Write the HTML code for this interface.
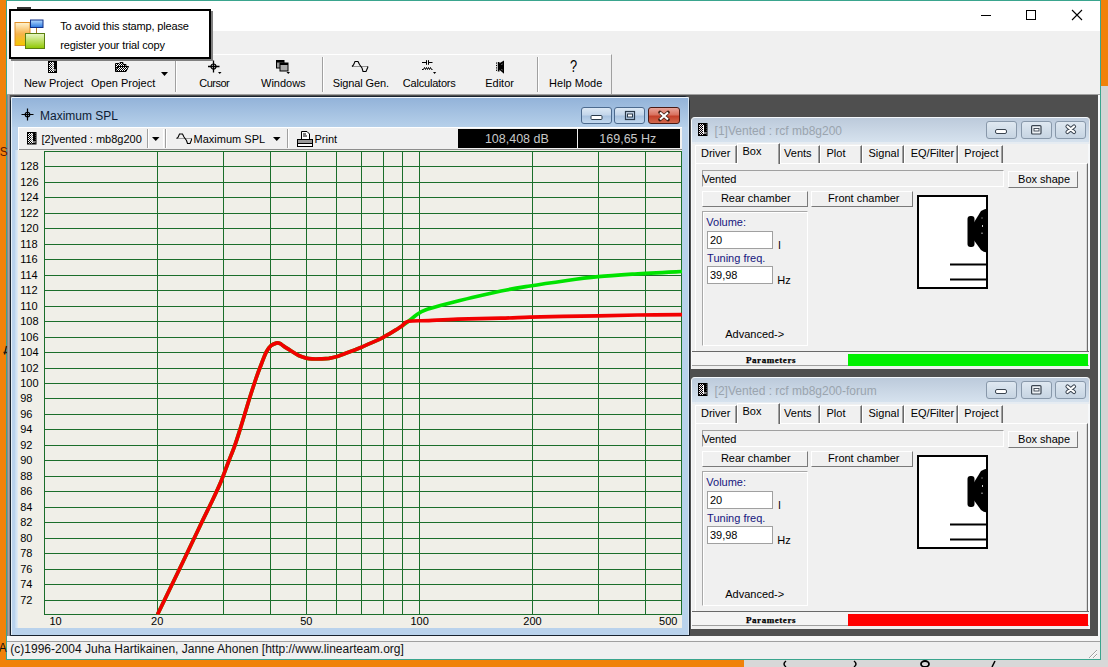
<!DOCTYPE html>
<html><head><meta charset="utf-8">
<style>
*{box-sizing:border-box;margin:0;padding:0}
html,body{width:1108px;height:667px;overflow:hidden;background:#f0820a;font-family:"Liberation Sans",sans-serif;font-size:11px;color:#000}
.a{position:absolute}
.t{position:absolute;white-space:pre;line-height:1}
svg{overflow:visible}
</style></head><body>

<svg width="0" height="0" style="position:absolute"><defs><pattern id="chk" width="2" height="2" patternUnits="userSpaceOnUse"><rect width="2" height="2" fill="#fff"/><rect width="1" height="1" fill="#000"/><rect x="1" y="1" width="1" height="1" fill="#000"/></pattern><pattern id="chkp" width="2" height="2" patternUnits="userSpaceOnUse"><rect width="2" height="2" fill="#f4e8f0"/><rect width="1" height="1" fill="#000"/><rect x="1" y="1" width="1" height="1" fill="#000"/></pattern></defs></svg>
<div class="a" style="left:1101px;top:86px;width:7px;height:581px;background:#d4d4d4"></div>
<div class="a" style="left:744px;top:660px;width:364px;height:7px;background:#d4d4d4"></div>
<div class="a" style="left:6px;top:0px;width:1095px;height:660px;background:#f0f0f0;border:1px solid #3aa58e"></div>
<div class="a" style="left:7px;top:1px;width:1093px;height:30px;background:#fff"></div>
<div class="a" style="left:981px;top:15px;width:10px;height:1px;background:#000"></div>
<div class="a" style="left:1026px;top:10px;width:10px;height:10px;border:1px solid #000"></div>
<svg class="a" style="left:1071px;top:9px;" width="12" height="12" viewBox="0 0 12 12"><path d="M1 1L11 11M11 1L1 11" stroke="#000" stroke-width="1.1"/></svg>
<div class="a" style="left:17px;top:7px;width:14px;height:2px;background:#333"></div>
<div class="a" style="left:13px;top:54px;width:599px;height:41px;border-left:1px solid #fff;border-top:1px solid #fff;border-right:1px solid #a0a0a0"></div>
<div class="a" style="left:7px;top:94px;width:1093px;height:1px;background:#a0a0a0"></div>
<div class="a" style="left:175px;top:57px;width:1px;height:35px;background:#a0a0a0;border-right:0"></div>
<div class="a" style="left:176px;top:57px;width:1px;height:35px;background:#fff"></div>
<div class="a" style="left:322px;top:57px;width:1px;height:35px;background:#a0a0a0;border-right:0"></div>
<div class="a" style="left:323px;top:57px;width:1px;height:35px;background:#fff"></div>
<div class="a" style="left:537px;top:57px;width:1px;height:35px;background:#a0a0a0;border-right:0"></div>
<div class="a" style="left:538px;top:57px;width:1px;height:35px;background:#fff"></div>
<div class="t" style="left:23.9px;top:77.8px;font-size:11px;">New Project</div>
<div class="t" style="left:91.0px;top:77.8px;font-size:11px;">Open Project</div>
<div class="t" style="left:199.2px;top:77.8px;font-size:11px;letter-spacing:-0.5px">Cursor</div>
<div class="t" style="left:261.0px;top:77.8px;font-size:11px;">Windows</div>
<div class="t" style="left:332.8px;top:77.8px;font-size:11px;letter-spacing:-0.12px">Signal Gen.</div>
<div class="t" style="left:402.8px;top:77.8px;font-size:11px;letter-spacing:-0.2px">Calculators</div>
<div class="t" style="left:485.2px;top:77.8px;font-size:11px;">Editor</div>
<div class="t" style="left:549.1px;top:77.8px;font-size:11px;">Help Mode</div>
<svg class="a" style="left:161px;top:72px;" width="8" height="4" viewBox="0 0 8 4"><path d="M0 0H7L3.5 4Z" fill="#000"/></svg>
<svg class="a" style="left:48px;top:61px;" width="10" height="12" viewBox="0 0 10 12"><rect x="0.5" y="0.5" width="8" height="11" fill="url(#chk)" stroke="#000"/><rect x="6" y="1" width="2.5" height="10" fill="#000"/><path d="M5 1V9H8" stroke="#fff" stroke-width="1" fill="none"/></svg>
<svg class="a" style="left:115px;top:62px;" width="14" height="10" viewBox="0 0 14 10"><path d="M0.5 9.5V1.5H4L5 0.5H8V2.5H11V4.5H13.5L11 9.5Z" fill="url(#chk)" stroke="#000"/><path d="M0.5 9.5L3 4.5H13.5" stroke="#000" fill="none"/></svg>
<svg class="a" style="left:206px;top:60px;" width="16" height="15" viewBox="0 0 16 15"><path d="M2 6.5H13.5M7.5 0.5V12.5" stroke="#000" stroke-width="1.3"/><circle cx="7.5" cy="6.5" r="2.5" fill="none" stroke="#000" stroke-width="1.2"/><path d="M12 12H15.5L13.75 14Z" fill="#000"/></svg>
<svg class="a" style="left:276px;top:60px;" width="15" height="15" viewBox="0 0 15 15"><rect x="0.5" y="0.5" width="7.5" height="7.5" fill="#999" stroke="#000"/><rect x="0.5" y="0.5" width="7.5" height="2" fill="#000"/><rect x="4" y="3" width="8" height="8" fill="#aaa" stroke="#000"/><rect x="4" y="3" width="8" height="2" fill="#000"/><path d="M10.5 12H14L12.25 14Z" fill="#000"/></svg>
<svg class="a" style="left:351px;top:60px;" width="18" height="13" viewBox="0 0 18 13"><path d="M1 6.5H17" stroke="#777" stroke-width="0.8"/><path d="M1 6.5L2.5 5L4 1.5H7L8.5 4.5L11 8L12 11.5H15L16.5 8L17 6.5" stroke="#000" stroke-width="1.1" fill="none"/></svg>
<svg class="a" style="left:421px;top:59px;" width="17" height="17" viewBox="0 0 17 17"><path d="M1 3.5H5.5M7.5 3.5H11.5" stroke="#000" stroke-width="1.2"/><path d="M5.5 1.2V5.8M7.5 1.2V5.8" stroke="#000" stroke-width="1"/><path d="M1 10.5H2.5L3.5 8.5L4.5 10.5L5.5 8.5L6.5 10.5L7.5 8.5L8.5 10.5L9.5 8.5L10.5 10.5H11.5" stroke="#000" stroke-width="1" fill="none"/><path d="M12 13H15.2L13.6 15Z" fill="#000"/></svg>
<svg class="a" style="left:495px;top:60px;" width="11" height="15" viewBox="0 0 11 15"><path d="M1.5 2.5V11.5" stroke="#000" stroke-dasharray="1.2,1.2"/><rect x="2.8" y="2" width="1.7" height="9.5" fill="#000"/><path d="M4 3.5L9 0.5V13.8L4 9.5Z" fill="#000"/><path d="M6.5 4.5L7.5 4M6.5 9.5L7.5 10" stroke="#ccc" stroke-width="0.8"/></svg>
<div class="t" style="left:569.8px;top:59.1px;font-size:16px;transform:scaleX(0.8);transform-origin:0 0">?</div>
<div class="a" style="left:7px;top:95px;width:1093px;height:541px;background:#4f4f4f"></div>
<div class="a" style="left:7px;top:95px;width:3px;height:541px;background:#8c868c"></div>
<div class="a" style="left:8px;top:95px;width:1px;height:541px;background:#a8a2a2"></div>
<div class="a" style="left:1098px;top:95px;width:2px;height:541px;background:#f6f8fa"></div>
<div class="a" style="left:7px;top:636px;width:1093px;height:23px;background:#f0f0f0"></div>
<div class="a" style="left:7px;top:636px;width:1093px;height:5px;background:#f6f6f6"></div>
<div class="a" style="left:7px;top:641px;width:1093px;height:1px;background:#a0a0a0"></div>
<div class="t" style="left:10.3px;top:643.4px;font-size:12px;color:#111">(c)1996-2004 Juha Hartikainen, Janne Ahonen [http://www.linearteam.org]</div>
<div class="a" style="left:10px;top:96px;width:680px;height:540px;background:#b9d2ec;border:1px solid #18222e;border-radius:5px 5px 0 0"></div>
<div class="a" style="left:11px;top:97px;width:678px;height:1px;background:#f0f6fc;border-radius:4px 4px 0 0"></div>
<div class="a" style="left:11px;top:98px;width:678px;height:29px;background:linear-gradient(#93b3d9,#b6d0ea)"></div>
<div class="a" style="left:11px;top:98px;width:1px;height:537px;background:#e6f0f8"></div>
<div class="a" style="left:688px;top:98px;width:1px;height:537px;background:#d6e4f2"></div>
<svg class="a" style="left:21px;top:108px;" width="13" height="13" viewBox="0 0 13 13"><path d="M0.5 6.5H12.5M6.5 0.5V12.5" stroke="#000" stroke-width="1.2"/><circle cx="6.5" cy="6.5" r="2.3" fill="none" stroke="#000" stroke-width="1.1"/></svg>
<div class="t" style="left:40.0px;top:110.0px;font-size:12px;color:#0e1c34">Maximum SPL</div>
<div class="a" style="left:581px;top:107px;width:31px;height:17px;border:1px solid #4c6a8e;border-radius:3px;background:linear-gradient(#dce8f4 0%,#c4d6ea 45%,#a9c3e0 55%,#c2d8ee 100%)"></div>
<svg class="a" style="left:590px;top:115px;" width="14" height="6" viewBox="0 0 14 6"><rect x="1" y="0.5" width="11" height="4" rx="1" fill="#fff" stroke="#2a3a4a"/></svg>
<div class="a" style="left:614px;top:107px;width:31px;height:17px;border:1px solid #4c6a8e;border-radius:3px;background:linear-gradient(#dce8f4 0%,#c4d6ea 45%,#a9c3e0 55%,#c2d8ee 100%)"></div>
<svg class="a" style="left:625px;top:111px;" width="10" height="9" viewBox="0 0 10 9"><rect x="0.5" y="0.5" width="9" height="8" fill="none" stroke="#2a3a4a" stroke-width="1.2"/><rect x="2.5" y="3" width="5" height="3" fill="#fff" stroke="#2a3a4a"/></svg>
<div class="a" style="left:648px;top:107px;width:32px;height:17px;border:1px solid #4a1a14;border-radius:3px;background:linear-gradient(#e8a49a 0%,#d9725f 45%,#c4402a 55%,#d26a4e 100%)"></div>
<svg class="a" style="left:658px;top:111px;" width="12" height="10" viewBox="0 0 12 10"><path d="M2 1.5L10 8.5M10 1.5L2 8.5" stroke="#3a1a10" stroke-width="3.6" stroke-linecap="round"/><path d="M2 1.5L10 8.5M10 1.5L2 8.5" stroke="#fff" stroke-width="2.2"/></svg>
<div class="a" style="left:18px;top:127px;width:664px;height:23px;background:#f0f0f0;border-top:1px solid #fff"></div>
<div class="a" style="left:18px;top:149px;width:664px;height:1px;background:#8c8c8c"></div>
<div class="a" style="left:18px;top:127px;width:1px;height:23px;background:#fff"></div>
<svg class="a" style="left:27px;top:132px;" width="10" height="13" viewBox="0 0 10 13"><rect x="0.5" y="0.5" width="8.5" height="11.5" fill="url(#chk)" stroke="#000"/><rect x="6" y="1" width="2.5" height="11" fill="#000"/><path d="M5 1V10H8.5" stroke="#fff" fill="none"/></svg>
<div class="t" style="left:41.5px;top:133.8px;font-size:11px;">[2]vented : mb8g200</div>
<div class="a" style="left:147px;top:129px;width:1px;height:19px;background:#a0a0a0"></div>
<div class="a" style="left:148px;top:129px;width:1px;height:19px;background:#fff"></div>
<svg class="a" style="left:152px;top:137px;" width="8" height="4" viewBox="0 0 8 4"><path d="M0 0H7.5L3.75 4Z" fill="#000"/></svg>
<div class="a" style="left:163px;top:129px;width:1px;height:19px;background:#fff"></div>
<div class="a" style="left:165px;top:129px;width:1px;height:19px;background:#a0a0a0"></div>
<div class="a" style="left:166px;top:129px;width:1px;height:19px;background:#fff"></div>
<svg class="a" style="left:176px;top:132px;" width="17" height="13" viewBox="0 0 17 13"><path d="M1 6.5H15.5" stroke="#888" stroke-width="0.8"/><path d="M0.5 6.5L2 5.5L3.5 2H6.5L8 5L10.5 8.5L11.5 11.5H14L15.5 8V6.5" stroke="#000" stroke-width="1.1" fill="none"/></svg>
<div class="t" style="left:193.6px;top:133.8px;font-size:11px;">Maximum SPL</div>
<svg class="a" style="left:273px;top:137px;" width="8" height="4" viewBox="0 0 8 4"><path d="M0 0H7.5L3.75 4Z" fill="#000"/></svg>
<div class="a" style="left:287px;top:129px;width:1px;height:19px;background:#a0a0a0"></div>
<div class="a" style="left:288px;top:129px;width:1px;height:19px;background:#fff"></div>
<svg class="a" style="left:297px;top:131px;" width="16" height="16" viewBox="0 0 16 16"><path d="M4.5 0.5H10L12.5 3V8.5H4.5Z" fill="#fff" stroke="#000"/><path d="M6 3H9M6 5H10" stroke="#000"/><rect x="0.5" y="8.5" width="15" height="4" fill="#999" stroke="#000"/><rect x="0.5" y="12.5" width="15" height="3" fill="#fff" stroke="#000"/></svg>
<div class="t" style="left:314.5px;top:133.8px;font-size:11px;">Print</div>
<div class="a" style="left:458px;top:129px;width:119px;height:19px;background:#000"></div>
<div class="a" style="left:578px;top:129px;width:102px;height:19px;background:#000"></div>
<div class="t" style="left:484.9px;top:133.1px;font-size:12.5px;color:#c8c8c8">108,408 dB</div>
<div class="t" style="left:599.3px;top:133.1px;font-size:12.5px;color:#c8c8c8">169,65 Hz</div>
<div class="a" style="left:18px;top:150px;width:664px;height:478px;background:#f0efe8"></div>
<div class="a" style="left:15px;top:150px;width:3px;height:478px;background:linear-gradient(90deg,#c4daf0,#e2ecf4)"></div>
<svg class="a" style="left:0;top:0" width="1108" height="667" viewBox="0 0 1108 667"><defs><clipPath id="pc"><rect x="44" y="151" width="638" height="464"/></clipPath></defs><g shape-rendering="crispEdges"><rect x="44.5" y="151.5" width="637" height="463" fill="none" stroke="#1b6e2b" stroke-width="1"/><rect x="157" y="151" width="1" height="464" fill="#1b6e2b"/><rect x="223" y="151" width="1" height="464" fill="#1b6e2b"/><rect x="270" y="151" width="1" height="464" fill="#1b6e2b"/><rect x="306" y="151" width="1" height="464" fill="#1b6e2b"/><rect x="336" y="151" width="1" height="464" fill="#1b6e2b"/><rect x="361" y="151" width="1" height="464" fill="#1b6e2b"/><rect x="383" y="151" width="1" height="464" fill="#1b6e2b"/><rect x="402" y="151" width="1" height="464" fill="#1b6e2b"/><rect x="419" y="151" width="1" height="464" fill="#1b6e2b"/><rect x="532" y="151" width="1" height="464" fill="#1b6e2b"/><rect x="598" y="151" width="1" height="464" fill="#1b6e2b"/><rect x="645" y="151" width="1" height="464" fill="#1b6e2b"/><rect x="44" y="166" width="638" height="1" fill="#1b6e2b"/><rect x="44" y="182" width="638" height="1" fill="#1b6e2b"/><rect x="44" y="197" width="638" height="1" fill="#1b6e2b"/><rect x="44" y="213" width="638" height="1" fill="#1b6e2b"/><rect x="44" y="228" width="638" height="1" fill="#1b6e2b"/><rect x="44" y="244" width="638" height="1" fill="#1b6e2b"/><rect x="44" y="259" width="638" height="1" fill="#1b6e2b"/><rect x="44" y="275" width="638" height="1" fill="#1b6e2b"/><rect x="44" y="290" width="638" height="1" fill="#1b6e2b"/><rect x="44" y="306" width="638" height="1" fill="#1b6e2b"/><rect x="44" y="321" width="638" height="1" fill="#1b6e2b"/><rect x="44" y="337" width="638" height="1" fill="#1b6e2b"/><rect x="44" y="352" width="638" height="1" fill="#1b6e2b"/><rect x="44" y="368" width="638" height="1" fill="#1b6e2b"/><rect x="44" y="383" width="638" height="1" fill="#1b6e2b"/><rect x="44" y="398" width="638" height="1" fill="#1b6e2b"/><rect x="44" y="414" width="638" height="1" fill="#1b6e2b"/><rect x="44" y="429" width="638" height="1" fill="#1b6e2b"/><rect x="44" y="445" width="638" height="1" fill="#1b6e2b"/><rect x="44" y="460" width="638" height="1" fill="#1b6e2b"/><rect x="44" y="476" width="638" height="1" fill="#1b6e2b"/><rect x="44" y="491" width="638" height="1" fill="#1b6e2b"/><rect x="44" y="507" width="638" height="1" fill="#1b6e2b"/><rect x="44" y="522" width="638" height="1" fill="#1b6e2b"/><rect x="44" y="538" width="638" height="1" fill="#1b6e2b"/><rect x="44" y="553" width="638" height="1" fill="#1b6e2b"/><rect x="44" y="569" width="638" height="1" fill="#1b6e2b"/><rect x="44" y="584" width="638" height="1" fill="#1b6e2b"/><rect x="44" y="600" width="638" height="1" fill="#1b6e2b"/></g><path d="M157.5 614.5 C161.8 605.7 175.9 576.5 183.0 561.7 C190.1 547.0 195.1 536.3 200.0 526.0 C204.9 515.7 209.1 507.4 212.6 500.0 C216.1 492.6 218.4 487.8 221.0 481.5 C223.6 475.2 226.1 467.9 228.4 462.0 C230.7 456.1 232.8 451.1 234.7 445.8 C236.6 440.5 237.5 437.6 239.9 430.0 C242.3 422.4 246.3 408.6 249.0 400.0 C251.7 391.4 254.0 384.4 256.0 378.5 C258.0 372.6 259.4 369.0 261.2 364.5 C262.9 360.0 264.9 354.8 266.5 351.7 C268.1 348.6 269.4 347.1 271.0 345.7 C272.6 344.3 274.7 343.5 276.2 343.1 C277.7 342.7 278.8 343.0 280.0 343.5 C281.2 344.0 281.8 344.9 283.7 346.1 C285.6 347.4 288.7 349.4 291.2 351.0 C293.7 352.6 296.2 354.3 298.7 355.5 C301.2 356.7 304.0 357.5 306.2 358.1 C308.4 358.7 309.7 358.8 312.0 358.9 C314.3 359.0 317.2 359.0 320.0 358.9 C322.8 358.8 326.0 358.8 329.0 358.4 C332.0 357.9 335.0 357.1 338.0 356.2 C341.0 355.3 343.2 354.3 347.1 352.8 C351.0 351.3 357.0 349.1 361.5 347.2 C366.0 345.3 370.6 343.2 374.2 341.6 C377.8 340.0 380.2 338.9 383.2 337.3 C386.2 335.7 389.2 333.9 392.2 332.1 C395.2 330.3 398.5 328.3 401.2 326.5 C403.9 324.7 405.8 323.4 408.5 321.3 C411.2 319.2 414.4 316.1 417.3 314.2 C420.2 312.3 421.7 311.4 426.0 309.8 C430.3 308.2 435.6 306.9 443.3 304.8 C451.0 302.8 462.6 299.8 472.2 297.5 C481.8 295.2 491.5 292.9 501.1 291.0 C510.7 289.1 519.0 287.8 530.0 286.0 C541.0 284.2 555.7 282.1 567.1 280.5 C578.5 278.9 586.9 277.8 598.2 276.7 C609.5 275.6 620.8 274.9 634.8 274.0 C648.8 273.1 674.1 271.9 682.0 271.5" fill="none" stroke="#00e200" stroke-width="3.7" stroke-linejoin="round" clip-path="url(#pc)"/><path d="M157.5 614.5 C161.8 605.7 175.9 576.5 183.0 561.7 C190.1 547.0 195.1 536.3 200.0 526.0 C204.9 515.7 209.1 507.4 212.6 500.0 C216.1 492.6 218.4 487.8 221.0 481.5 C223.6 475.2 226.1 467.9 228.4 462.0 C230.7 456.1 232.8 451.1 234.7 445.8 C236.6 440.5 237.5 437.6 239.9 430.0 C242.3 422.4 246.3 408.6 249.0 400.0 C251.7 391.4 254.0 384.4 256.0 378.5 C258.0 372.6 259.4 369.0 261.2 364.5 C262.9 360.0 264.9 354.8 266.5 351.7 C268.1 348.6 269.4 347.1 271.0 345.7 C272.6 344.3 274.7 343.5 276.2 343.1 C277.7 342.7 278.8 343.0 280.0 343.5 C281.2 344.0 281.8 344.9 283.7 346.1 C285.6 347.4 288.7 349.4 291.2 351.0 C293.7 352.6 296.2 354.3 298.7 355.5 C301.2 356.7 304.0 357.5 306.2 358.1 C308.4 358.7 309.7 358.8 312.0 358.9 C314.3 359.0 317.2 359.0 320.0 358.9 C322.8 358.8 326.0 358.8 329.0 358.4 C332.0 357.9 335.0 357.1 338.0 356.2 C341.0 355.3 343.2 354.3 347.1 352.8 C351.0 351.3 357.0 349.1 361.5 347.2 C366.0 345.3 370.6 343.2 374.2 341.6 C377.8 340.0 380.2 338.9 383.2 337.3 C386.2 335.7 389.2 333.9 392.2 332.1 C395.2 330.3 398.5 328.3 401.2 326.5 C403.9 324.7 403.9 322.3 408.5 321.3 C413.1 320.3 420.7 321.0 428.9 320.6 C437.1 320.2 445.8 319.6 457.8 319.2 C469.8 318.8 489.1 318.5 501.1 318.2 C513.1 317.9 519.7 317.5 530.0 317.2 C540.3 316.9 551.6 316.6 563.0 316.4 C574.4 316.2 585.8 316.0 598.2 315.8 C610.6 315.6 623.5 315.2 637.5 315.0 C651.5 314.8 674.6 314.7 682.0 314.6" fill="none" stroke="#f20000" stroke-width="3.7" stroke-linejoin="round" clip-path="url(#pc)"/></svg>
<div class="t" style="left:20.2px;top:161.1px;font-size:11px;">128</div>
<div class="t" style="left:20.2px;top:177.1px;font-size:11px;">126</div>
<div class="t" style="left:20.2px;top:192.1px;font-size:11px;">124</div>
<div class="t" style="left:20.2px;top:208.1px;font-size:11px;">122</div>
<div class="t" style="left:20.2px;top:223.1px;font-size:11px;">120</div>
<div class="t" style="left:20.2px;top:239.1px;font-size:11px;">118</div>
<div class="t" style="left:20.2px;top:254.1px;font-size:11px;">116</div>
<div class="t" style="left:20.2px;top:270.1px;font-size:11px;">114</div>
<div class="t" style="left:20.2px;top:285.1px;font-size:11px;">112</div>
<div class="t" style="left:20.2px;top:301.1px;font-size:11px;">110</div>
<div class="t" style="left:20.2px;top:316.1px;font-size:11px;">108</div>
<div class="t" style="left:20.2px;top:332.1px;font-size:11px;">106</div>
<div class="t" style="left:20.2px;top:347.1px;font-size:11px;">104</div>
<div class="t" style="left:20.2px;top:363.1px;font-size:11px;">102</div>
<div class="t" style="left:20.2px;top:378.1px;font-size:11px;">100</div>
<div class="t" style="left:20.2px;top:393.1px;font-size:11px;">98</div>
<div class="t" style="left:20.2px;top:409.1px;font-size:11px;">96</div>
<div class="t" style="left:20.2px;top:424.1px;font-size:11px;">94</div>
<div class="t" style="left:20.2px;top:440.1px;font-size:11px;">92</div>
<div class="t" style="left:20.2px;top:455.1px;font-size:11px;">90</div>
<div class="t" style="left:20.2px;top:471.1px;font-size:11px;">88</div>
<div class="t" style="left:20.2px;top:486.1px;font-size:11px;">86</div>
<div class="t" style="left:20.2px;top:502.1px;font-size:11px;">84</div>
<div class="t" style="left:20.2px;top:517.1px;font-size:11px;">82</div>
<div class="t" style="left:20.2px;top:533.1px;font-size:11px;">80</div>
<div class="t" style="left:20.2px;top:548.1px;font-size:11px;">78</div>
<div class="t" style="left:20.2px;top:564.1px;font-size:11px;">76</div>
<div class="t" style="left:20.2px;top:579.1px;font-size:11px;">74</div>
<div class="t" style="left:20.2px;top:595.1px;font-size:11px;">72</div>
<div class="t" style="left:15.5px;width:80px;text-align:center;top:616.3px;font-size:11px">10</div>
<div class="t" style="left:117.19999999999999px;width:80px;text-align:center;top:616.3px;font-size:11px">20</div>
<div class="t" style="left:266.3px;width:80px;text-align:center;top:616.3px;font-size:11px">50</div>
<div class="t" style="left:379.6px;width:80px;text-align:center;top:616.3px;font-size:11px">100</div>
<div class="t" style="left:492.5px;width:80px;text-align:center;top:616.3px;font-size:11px">200</div>
<div class="t" style="left:628.3px;width:80px;text-align:center;top:616.3px;font-size:11px">500</div>
<div class="a" style="left:691px;top:117px;width:399px;height:252px;background:#f0f0f0;border-radius:4px 4px 0 0;border-top:1px solid #f4f8fc;border-left:1px solid #f8fafc"></div>
<div class="a" style="left:692px;top:118px;width:397px;height:24px;background:linear-gradient(#bccadb,#d6e2ee);border-radius:3px 3px 0 0"></div>
<div class="a" style="left:692px;top:142px;width:397px;height:2px;background:#e6ecf2"></div>
<svg class="a" style="left:698px;top:123px;" width="10" height="13" viewBox="0 0 10 13"><rect x="0.5" y="0.5" width="8.5" height="12" fill="url(#chkp)" stroke="#000"/><rect x="6" y="1" width="2.5" height="11.5" fill="#000"/><path d="M5.5 2V10H8.5" stroke="#fff" fill="none"/></svg>
<div class="t" style="left:714.6px;top:124.6px;font-size:12px;color:#9aa4ae">[1]Vented : rcf mb8g200</div>
<div class="a" style="left:986px;top:121px;width:31px;height:18px;border:1px solid #8898aa;border-radius:3px;background:linear-gradient(#dfe8f1,#c6d4e2)"></div>
<svg class="a" style="left:995px;top:129px;" width="13" height="5" viewBox="0 0 13 5"><rect x="0.5" y="0.5" width="11" height="4" rx="1.5" fill="#fff" stroke="#3a4450"/></svg>
<div class="a" style="left:1021px;top:121px;width:31px;height:18px;border:1px solid #8898aa;border-radius:3px;background:linear-gradient(#dfe8f1,#c6d4e2)"></div>
<svg class="a" style="left:1031px;top:125px;" width="11" height="10" viewBox="0 0 11 10"><rect x="0.6" y="0.6" width="9.4" height="8.4" rx="1" fill="#eef2f6" stroke="#3a4450" stroke-width="1.2"/><rect x="3" y="3.5" width="5" height="2.5" fill="#fff" stroke="#3a4450" stroke-width="0.9"/></svg>
<div class="a" style="left:1055px;top:121px;width:31px;height:18px;border:1px solid #8898aa;border-radius:3px;background:linear-gradient(#dfe8f1,#c6d4e2)"></div>
<svg class="a" style="left:1064px;top:123px;" width="14" height="12" viewBox="0 0 14 12"><path d="M3.5 3.5L10 9M10 3.5L3.5 9" stroke="#3a4450" stroke-width="4.2" stroke-linecap="round"/><path d="M3.5 3.5L10 9M10 3.5L3.5 9" stroke="#fff" stroke-width="2.2" stroke-linecap="round"/></svg>
<div class="a" style="left:695px;top:163px;width:393px;height:190px;border-top:1px solid #fff;border-left:1px solid #fff;border-right:1px solid #6c6c6c;border-bottom:1px solid #6c6c6c;box-shadow:inset -1px -1px 0 #d8d8d8"></div>
<div class="a" style="left:1088px;top:144px;width:2px;height:225px;background:#f6f8fa"></div>
<div class="a" style="left:695px;top:145px;width:42px;height:18px;border-top:1px solid #fff;border-left:1px solid #fff;border-right:1px solid #696969;box-shadow:inset -1px 0 0 #a0a0a0"></div>
<div class="t" style="left:701.0px;top:147.9px;font-size:11px;">Driver</div>
<div class="a" style="left:737px;top:143px;width:43px;height:21px;background:#f0f0f0;border-top:1px solid #fff;border-left:1px solid #fff;border-right:1px solid #696969;box-shadow:inset -1px 0 0 #a0a0a0"></div>
<div class="t" style="left:742.5px;top:146.1px;font-size:11px;">Box</div>
<div class="a" style="left:780px;top:145px;width:40px;height:18px;border-top:1px solid #fff;border-left:1px solid #fff;border-right:1px solid #696969;box-shadow:inset -1px 0 0 #a0a0a0"></div>
<div class="t" style="left:784.1px;top:147.9px;font-size:11px;">Vents</div>
<div class="a" style="left:820px;top:145px;width:42px;height:18px;border-top:1px solid #fff;border-left:1px solid #fff;border-right:1px solid #696969;box-shadow:inset -1px 0 0 #a0a0a0"></div>
<div class="t" style="left:826.5px;top:147.9px;font-size:11px;">Plot</div>
<div class="a" style="left:862px;top:145px;width:42px;height:18px;border-top:1px solid #fff;border-left:1px solid #fff;border-right:1px solid #696969;box-shadow:inset -1px 0 0 #a0a0a0"></div>
<div class="t" style="left:868.5px;top:147.9px;font-size:11px;">Signal</div>
<div class="a" style="left:904px;top:145px;width:54px;height:18px;border-top:1px solid #fff;border-left:1px solid #fff;border-right:1px solid #696969;box-shadow:inset -1px 0 0 #a0a0a0"></div>
<div class="t" style="left:910.7px;top:147.9px;font-size:11px;">EQ/Filter</div>
<div class="a" style="left:958px;top:145px;width:45px;height:18px;border-top:1px solid #fff;border-left:1px solid #fff;border-right:1px solid #696969;box-shadow:inset -1px 0 0 #a0a0a0"></div>
<div class="t" style="left:964.3px;top:147.9px;font-size:11px;">Project</div>
<div class="a" style="left:702px;top:170px;width:302px;height:17px;background:#f0f0f0;border-top:1px solid #a0a0a0;border-left:1px solid #a0a0a0;border-bottom:1px solid #fff;border-right:1px solid #fff"></div>
<div class="t" style="left:702.2px;top:173.6px;font-size:11px;">Vented</div>
<div class="a" style="left:1008px;top:171px;width:70px;height:17px;background:#f0f0f0;border-top:1px solid #fff;border-left:1px solid #fff;border-bottom:1px solid #7a7a7a;border-right:1px solid #7a7a7a"></div>
<div class="t" style="left:1018.1px;top:174.1px;font-size:11px;">Box shape</div>
<div class="a" style="left:702px;top:191px;width:106px;height:16px;background:#f0f0f0;border-top:1px solid #fff;border-left:1px solid #fff;border-bottom:1px solid #7a7a7a;border-right:1px solid #7a7a7a"></div>
<div class="t" style="left:720.9px;top:192.9px;font-size:11px;">Rear chamber</div>
<div class="a" style="left:811px;top:191px;width:102px;height:16px;background:#f0f0f0;border-top:1px solid #fff;border-left:1px solid #fff;border-bottom:1px solid #7a7a7a;border-right:1px solid #7a7a7a"></div>
<div class="t" style="left:828.0px;top:192.9px;font-size:11px;">Front chamber</div>
<div class="a" style="left:702px;top:211px;width:106px;height:135px;border-top:1px solid #a8a8a8;border-left:1px solid #a8a8a8;border-right:1px solid #fff;border-bottom:1px solid #fff;box-shadow:inset 1px 1px 0 #fff"></div>
<div class="t" style="left:706.3px;top:217.1px;font-size:11px;color:#16167e">Volume:</div>
<div class="a" style="left:707px;top:231px;width:66px;height:18px;border:1px solid #a0a0a0;background:#fff"></div>
<div class="t" style="left:709.9px;top:234.9px;font-size:11px;">20</div>
<div class="t" style="left:778.3px;top:239.9px;font-size:11px;">l</div>
<div class="t" style="left:707.1px;top:252.9px;font-size:11px;color:#16167e">Tuning freq.</div>
<div class="a" style="left:707px;top:266px;width:66px;height:18px;border:1px solid #a0a0a0;background:#fff"></div>
<div class="t" style="left:709.9px;top:269.9px;font-size:11px;">39,98</div>
<div class="t" style="left:777.3px;top:275.3px;font-size:11px;">Hz</div>
<div class="t" style="left:725.2px;top:329.0px;font-size:11px;">Advanced-></div>
<svg class="a" style="left:916px;top:194px;" width="74" height="97" viewBox="0 0 74 97"><rect x="2" y="2" width="69" height="92" fill="#fff" stroke="#000" stroke-width="2"/><rect x="51.5" y="22" width="7" height="31" rx="3" fill="#000"/><path d="M57 30L65 17Q71 14 71 15V58Q69 59 65 56L57 45Z" fill="#000"/><path d="M66 23.5V24.5M66.5 31V33M66 38.5V40" stroke="#ccc" stroke-width="1"/><path d="M34 70.5H71M34 85.5H71" stroke="#000" stroke-width="2"/></svg>
<div class="a" style="left:692px;top:351px;width:397px;height:1px;background:#696969"></div>
<div class="a" style="left:692px;top:352px;width:397px;height:13px;background:#f4f4f4"></div>
<div class="a" style="left:692px;top:365px;width:397px;height:1px;background:#a0a0a0"></div>
<div class="a" style="left:848px;top:354px;width:240px;height:12px;background:#00f000"></div>
<div class="t" style="left:746px;top:355.5px;font-family:'Liberation Serif',serif;font-weight:bold;font-size:9px;letter-spacing:0.55px;-webkit-text-stroke:0.25px #000">Parameters</div>
<div class="a" style="left:691px;top:377px;width:399px;height:252px;background:#f0f0f0;border-radius:4px 4px 0 0;border-top:1px solid #f4f8fc;border-left:1px solid #f8fafc"></div>
<div class="a" style="left:692px;top:378px;width:397px;height:24px;background:linear-gradient(#bccadb,#d6e2ee);border-radius:3px 3px 0 0"></div>
<div class="a" style="left:692px;top:402px;width:397px;height:2px;background:#e6ecf2"></div>
<svg class="a" style="left:698px;top:383px;" width="10" height="13" viewBox="0 0 10 13"><rect x="0.5" y="0.5" width="8.5" height="12" fill="url(#chkp)" stroke="#000"/><rect x="6" y="1" width="2.5" height="11.5" fill="#000"/><path d="M5.5 2V10H8.5" stroke="#fff" fill="none"/></svg>
<div class="t" style="left:714.6px;top:384.6px;font-size:12px;color:#9aa4ae">[2]Vented : rcf mb8g200-forum</div>
<div class="a" style="left:986px;top:381px;width:31px;height:18px;border:1px solid #8898aa;border-radius:3px;background:linear-gradient(#dfe8f1,#c6d4e2)"></div>
<svg class="a" style="left:995px;top:389px;" width="13" height="5" viewBox="0 0 13 5"><rect x="0.5" y="0.5" width="11" height="4" rx="1.5" fill="#fff" stroke="#3a4450"/></svg>
<div class="a" style="left:1021px;top:381px;width:31px;height:18px;border:1px solid #8898aa;border-radius:3px;background:linear-gradient(#dfe8f1,#c6d4e2)"></div>
<svg class="a" style="left:1031px;top:385px;" width="11" height="10" viewBox="0 0 11 10"><rect x="0.6" y="0.6" width="9.4" height="8.4" rx="1" fill="#eef2f6" stroke="#3a4450" stroke-width="1.2"/><rect x="3" y="3.5" width="5" height="2.5" fill="#fff" stroke="#3a4450" stroke-width="0.9"/></svg>
<div class="a" style="left:1055px;top:381px;width:31px;height:18px;border:1px solid #8898aa;border-radius:3px;background:linear-gradient(#dfe8f1,#c6d4e2)"></div>
<svg class="a" style="left:1064px;top:383px;" width="14" height="12" viewBox="0 0 14 12"><path d="M3.5 3.5L10 9M10 3.5L3.5 9" stroke="#3a4450" stroke-width="4.2" stroke-linecap="round"/><path d="M3.5 3.5L10 9M10 3.5L3.5 9" stroke="#fff" stroke-width="2.2" stroke-linecap="round"/></svg>
<div class="a" style="left:695px;top:423px;width:393px;height:190px;border-top:1px solid #fff;border-left:1px solid #fff;border-right:1px solid #6c6c6c;border-bottom:1px solid #6c6c6c;box-shadow:inset -1px -1px 0 #d8d8d8"></div>
<div class="a" style="left:1088px;top:404px;width:2px;height:225px;background:#f6f8fa"></div>
<div class="a" style="left:695px;top:405px;width:42px;height:18px;border-top:1px solid #fff;border-left:1px solid #fff;border-right:1px solid #696969;box-shadow:inset -1px 0 0 #a0a0a0"></div>
<div class="t" style="left:701.0px;top:407.9px;font-size:11px;">Driver</div>
<div class="a" style="left:737px;top:403px;width:43px;height:21px;background:#f0f0f0;border-top:1px solid #fff;border-left:1px solid #fff;border-right:1px solid #696969;box-shadow:inset -1px 0 0 #a0a0a0"></div>
<div class="t" style="left:742.5px;top:406.1px;font-size:11px;">Box</div>
<div class="a" style="left:780px;top:405px;width:40px;height:18px;border-top:1px solid #fff;border-left:1px solid #fff;border-right:1px solid #696969;box-shadow:inset -1px 0 0 #a0a0a0"></div>
<div class="t" style="left:784.1px;top:407.9px;font-size:11px;">Vents</div>
<div class="a" style="left:820px;top:405px;width:42px;height:18px;border-top:1px solid #fff;border-left:1px solid #fff;border-right:1px solid #696969;box-shadow:inset -1px 0 0 #a0a0a0"></div>
<div class="t" style="left:826.5px;top:407.9px;font-size:11px;">Plot</div>
<div class="a" style="left:862px;top:405px;width:42px;height:18px;border-top:1px solid #fff;border-left:1px solid #fff;border-right:1px solid #696969;box-shadow:inset -1px 0 0 #a0a0a0"></div>
<div class="t" style="left:868.5px;top:407.9px;font-size:11px;">Signal</div>
<div class="a" style="left:904px;top:405px;width:54px;height:18px;border-top:1px solid #fff;border-left:1px solid #fff;border-right:1px solid #696969;box-shadow:inset -1px 0 0 #a0a0a0"></div>
<div class="t" style="left:910.7px;top:407.9px;font-size:11px;">EQ/Filter</div>
<div class="a" style="left:958px;top:405px;width:45px;height:18px;border-top:1px solid #fff;border-left:1px solid #fff;border-right:1px solid #696969;box-shadow:inset -1px 0 0 #a0a0a0"></div>
<div class="t" style="left:964.3px;top:407.9px;font-size:11px;">Project</div>
<div class="a" style="left:702px;top:430px;width:302px;height:17px;background:#f0f0f0;border-top:1px solid #a0a0a0;border-left:1px solid #a0a0a0;border-bottom:1px solid #fff;border-right:1px solid #fff"></div>
<div class="t" style="left:702.2px;top:433.6px;font-size:11px;">Vented</div>
<div class="a" style="left:1008px;top:431px;width:70px;height:17px;background:#f0f0f0;border-top:1px solid #fff;border-left:1px solid #fff;border-bottom:1px solid #7a7a7a;border-right:1px solid #7a7a7a"></div>
<div class="t" style="left:1018.1px;top:434.1px;font-size:11px;">Box shape</div>
<div class="a" style="left:702px;top:451px;width:106px;height:16px;background:#f0f0f0;border-top:1px solid #fff;border-left:1px solid #fff;border-bottom:1px solid #7a7a7a;border-right:1px solid #7a7a7a"></div>
<div class="t" style="left:720.9px;top:452.9px;font-size:11px;">Rear chamber</div>
<div class="a" style="left:811px;top:451px;width:102px;height:16px;background:#f0f0f0;border-top:1px solid #fff;border-left:1px solid #fff;border-bottom:1px solid #7a7a7a;border-right:1px solid #7a7a7a"></div>
<div class="t" style="left:828.0px;top:452.9px;font-size:11px;">Front chamber</div>
<div class="a" style="left:702px;top:471px;width:106px;height:135px;border-top:1px solid #a8a8a8;border-left:1px solid #a8a8a8;border-right:1px solid #fff;border-bottom:1px solid #fff;box-shadow:inset 1px 1px 0 #fff"></div>
<div class="t" style="left:706.3px;top:477.1px;font-size:11px;color:#16167e">Volume:</div>
<div class="a" style="left:707px;top:491px;width:66px;height:18px;border:1px solid #a0a0a0;background:#fff"></div>
<div class="t" style="left:709.9px;top:494.9px;font-size:11px;">20</div>
<div class="t" style="left:778.3px;top:499.9px;font-size:11px;">l</div>
<div class="t" style="left:707.1px;top:512.9px;font-size:11px;color:#16167e">Tuning freq.</div>
<div class="a" style="left:707px;top:526px;width:66px;height:18px;border:1px solid #a0a0a0;background:#fff"></div>
<div class="t" style="left:709.9px;top:529.9px;font-size:11px;">39,98</div>
<div class="t" style="left:777.3px;top:535.3px;font-size:11px;">Hz</div>
<div class="t" style="left:725.2px;top:589.0px;font-size:11px;">Advanced-></div>
<svg class="a" style="left:916px;top:454px;" width="74" height="97" viewBox="0 0 74 97"><rect x="2" y="2" width="69" height="92" fill="#fff" stroke="#000" stroke-width="2"/><rect x="51.5" y="22" width="7" height="31" rx="3" fill="#000"/><path d="M57 30L65 17Q71 14 71 15V58Q69 59 65 56L57 45Z" fill="#000"/><path d="M66 23.5V24.5M66.5 31V33M66 38.5V40" stroke="#ccc" stroke-width="1"/><path d="M34 70.5H71M34 85.5H71" stroke="#000" stroke-width="2"/></svg>
<div class="a" style="left:692px;top:611px;width:397px;height:1px;background:#696969"></div>
<div class="a" style="left:692px;top:612px;width:397px;height:13px;background:#f4f4f4"></div>
<div class="a" style="left:692px;top:625px;width:397px;height:1px;background:#a0a0a0"></div>
<div class="a" style="left:848px;top:614px;width:240px;height:12px;background:#ff0000"></div>
<div class="t" style="left:746px;top:615.5px;font-family:'Liberation Serif',serif;font-weight:bold;font-size:9px;letter-spacing:0.55px;-webkit-text-stroke:0.25px #000">Parameters</div>
<svg class="a" style="left:1086px;top:647px;" width="12" height="12" viewBox="0 0 12 12"><path d="M11 3L3 11M11 7L7 11" stroke="#a0a0a0" stroke-width="1"/><path d="M11 4L4 11M11 8L8 11" stroke="#fff" stroke-width="1"/></svg>
<div class="a" style="left:744px;top:660px;width:364px;height:7px;background:#d8d8d8"></div>
<svg class="a" style="left:744px;top:660px;" width="364" height="7" viewBox="0 0 364 7"><path d="M42 1Q38 4 42 7" stroke="#000" stroke-width="1.5" fill="none"/><path d="M110 1Q114 4 110 7" stroke="#000" stroke-width="1.5" fill="none"/><ellipse cx="181" cy="4" rx="4" ry="3" fill="none" stroke="#000" stroke-width="1.8"/><path d="M251 1L248 7" stroke="#000" stroke-width="1.5"/></svg>
<div class="t" style="left:-0.2px;top:145.8px;font-size:12px;color:#5a1800">S</div>
<svg class="a" style="left:0px;top:344px;" width="10" height="14" viewBox="0 0 10 14"><path d="M6.5 2L4.5 10.5M3.5 8.5H7" stroke="#2a1a10" stroke-width="1.3"/></svg>
<div class="t" style="left:-1.2px;top:641.8px;font-size:12px;color:#111">A</div>
<div class="a" style="left:11px;top:11px;width:202px;height:50px;background:#808080"></div>
<div class="a" style="left:9px;top:9px;width:202px;height:50px;background:#fff;border:2px solid #000"></div>
<div class="t" style="left:60.2px;top:21.0px;font-size:11px;letter-spacing:-0.15px">To avoid this stamp, please</div>
<div class="t" style="left:60.2px;top:39.6px;font-size:11px;letter-spacing:-0.15px">register your trial copy</div>
<svg class="a" style="left:14px;top:19px;" width="32" height="31" viewBox="0 0 32 31"><defs><linearGradient id="go" x1="0" y1="0" x2="0" y2="1"><stop offset="0" stop-color="#fff4d0"/><stop offset="0.5" stop-color="#f7b24a"/><stop offset="1" stop-color="#f2c800"/></linearGradient><linearGradient id="gg" x1="0" y1="0" x2="0" y2="1"><stop offset="0" stop-color="#eaf7c8"/><stop offset="1" stop-color="#8fc800"/></linearGradient><linearGradient id="gb" x1="0" y1="0" x2="0" y2="1"><stop offset="0" stop-color="#b8dcff"/><stop offset="1" stop-color="#2a78e0"/></linearGradient></defs><rect x="1" y="3.5" width="15" height="23" fill="url(#go)" stroke="#e0902a"/><path d="M16 4.5H17M22.5 8V14" stroke="#b07830"/><rect x="16.5" y="1" width="12.5" height="7.5" fill="url(#gb)" stroke="#10308a"/><rect x="11.5" y="14.5" width="19" height="15" fill="url(#gg)" stroke="#5a8010"/></svg>
</body></html>
